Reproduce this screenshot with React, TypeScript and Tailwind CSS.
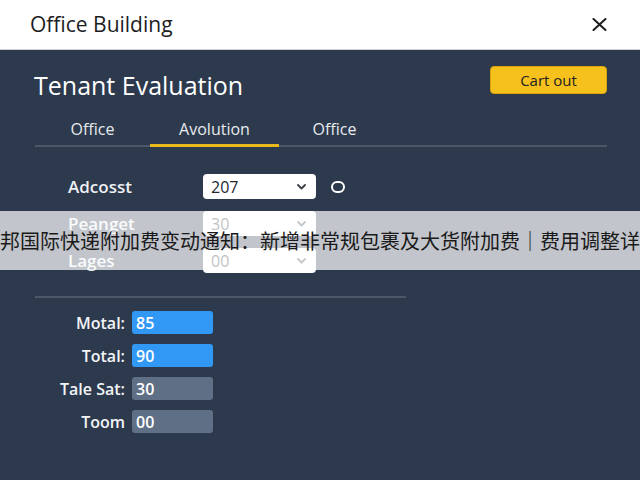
import React from "react";

function Chevron() {
  return (
    <svg width="9" height="6" viewBox="0 0 9 6" fill="none" className="mr-[10px]">
      <path d="M1 1l3.5 3.5L8 1" stroke="#3a3f47" strokeWidth="1.8" strokeLinecap="round" strokeLinejoin="round" />
    </svg>
  );
}

function SelectRow({ label, value }: { label: string; value: string }) {
  return (
    <div className="flex items-center h-[25px]">
      <div className="w-[135px] text-[17px] font-semibold text-[#eef0f3]">{label}</div>
      <div className="w-[113px] h-[25px] bg-white rounded-[4px] flex items-center justify-between pl-[8px]">
        <span className="text-[16px] font-medium text-[#222831]">{value}</span>
        <Chevron />
      </div>
    </div>
  );
}

function ScoreRow({ label, value, blue }: { label: string; value: string; blue?: boolean }) {
  return (
    <div className="flex items-center h-[23px]">
      <div className="w-[91px] text-right text-[16px] font-semibold text-[#f2f4f7] whitespace-nowrap">{label}</div>
      <div
        className={
          "ml-[7px] w-[81px] h-[23px] rounded-[3px] flex items-center pl-[4px] text-[16px] font-semibold text-white " +
          (blue ? "bg-[#3198f5]" : "bg-[#5f6f86]")
        }
      >
        {value}
      </div>
    </div>
  );
}

export default function App() {
  return (
    <div className="relative w-[640px] h-[480px] overflow-hidden bg-[#2d3a4d]" style={{ fontFamily: '"Open Sans", "Liberation Sans", sans-serif' }}>
      <div className="h-[50px] bg-white flex items-center justify-between pl-[30px] pr-[33px] border-b border-[#cfd3d8]">
        <span className="text-[21px] text-[#1d1d1f] leading-none">Office Building</span>
        <svg width="15" height="13" viewBox="0 0 15 13" fill="none">
          <path d="M1.5 1l12 11M13.5 1l-12 11" stroke="#1d1d1f" strokeWidth="2" strokeLinecap="round" />
        </svg>
      </div>

      <div className="pl-[34px] pr-[33px] pt-[16px]">
        <div className="flex items-start justify-between">
          <h1 className="mt-[5px] text-[25px] font-medium text-white leading-[28px]">Tenant Evaluation</h1>
          <button className="w-[117px] h-[28px] rounded-[4px] bg-[#f6c11c] border border-[#d9a50b] text-[15px] text-[#222] font-medium">
            Cart out
          </button>
        </div>

        <div className="mt-[14px] ml-[1px] flex border-b-2 border-[#4b5869] h-[34px]">
          <div className="w-[115px] flex items-center justify-center text-[16px] font-medium text-[#e8eaee]">Office</div>
          <div className="w-[129px] flex items-center justify-center text-[16px] font-medium text-[#e8eaee] border-b-[3px] border-[#e7b91a] -mb-[2px]">
            Avolution
          </div>
          <div className="w-[111px] flex items-center justify-center text-[16px] font-medium text-[#e8eaee]">Office</div>
        </div>

        <div className="mt-[27px] pl-[34px] flex flex-col gap-[12px]">
          <div className="flex items-center">
            <SelectRow label="Adcosst" value="207" />
            <div className="ml-[15px] w-[14px] h-[12px] rounded-full border-2 border-white" />
          </div>
          <SelectRow label="Peanget" value="30" />
          <SelectRow label="Lages" value="00" />
        </div>

        <div className="mt-[23px] ml-[1px] w-[371px] h-[2px] bg-[#4b5869]" />

        <div className="mt-[13px] flex flex-col gap-[10px]">
          <ScoreRow label="Motal:" value="85" blue />
          <ScoreRow label="Total:" value="90" blue />
          <ScoreRow label="Tale Sat:" value="30" />
          <ScoreRow label="Toom" value="00" />
        </div>
      </div>

      <div className="absolute left-0 right-0 top-[211px] h-[59px] bg-[rgba(255,255,255,0.71)] flex items-center justify-center overflow-hidden">
        <span
          className="whitespace-nowrap text-[20px] text-[#1a1a1a] leading-none"
          style={{ fontFamily: '"Noto Sans CJK SC", sans-serif' }}
        >
          联邦国际快递附加费变动通知：新增非常规包裹及大货附加费｜费用调整详情
        </span>
      </div>
    </div>
  );
}
